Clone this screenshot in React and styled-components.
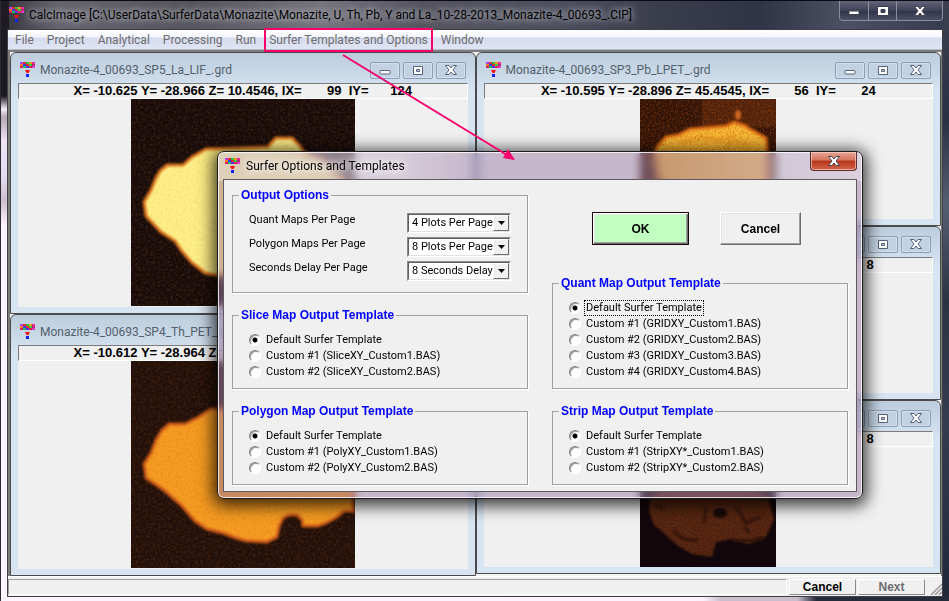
import React, { useState } from 'react';
import styled, { createGlobalStyle } from 'styled-components';

const GlobalStyle = createGlobalStyle`
  *, *::before, *::after {
    box-sizing: border-box;
  }

  body {
    margin: 0;
    background: #1d1f2b;
    font-family: "Liberation Sans", Arial, sans-serif;
    font-size: 11px;
    line-height: 16px;
    color: #000;
  }

  button, select, input {
    font: inherit;
    margin: 0;
  }
`

/* ---------- main window ---------- */

const Frame = styled.main`
  position: relative;
  display: flex;
  flex-direction: column;
  min-height: 100vh;
  padding: 0 6px 4px;
  border-top: 1px solid #0b0a14;
  border-left: 1px solid #2c2a30;
  overflow: hidden;
  background:
    linear-gradient(90deg, #fdf5fd 0, #fbf3fc 74%, #cbbdce 76%, #cbbdce 84%, #262b3a 86%, #262b3a 100%) bottom / 100% 5px no-repeat,
    linear-gradient(180deg, #201c24 0, #1c1820 95px, #f6ecfa 108px, #b5a8b6 116px, #efe4f5 140px, #e2dcf2 175px, #cfbfcf 200px, #fdf5fd 225px, #fdf5fd 100%) left / 8px 100% no-repeat,
    linear-gradient(180deg, #3c4052 0, #2a3144 20%, #566073 34%, #2b3344 50%, #343d50 70%, #20283a 100%) right / 8px 100% no-repeat,
    linear-gradient(90deg, #34333a 0, #65646d 6%, #55545c 20%, #75737c 34%, #54545f 44%, #4e505e 58%, #393c4b 70%, #2f3446 80%, #4b5062 89%, #363b50 100%);
`

const TitleBar = styled.header`
  display: flex;
  align-items: center;
  gap: 5px;
  height: 28px;
  padding-left: 2px;
`

const Title = styled.h1`
  flex: 1;
  margin: 0;
  font-family: Roboto, "Noto Sans", sans-serif;
  font-size: 12px;
  font-weight: 400;
  line-height: 16px;
  white-space: nowrap;
  text-shadow: 0 0 8px rgba(205, 205, 215, 0.9), 0 0 6px rgba(200, 200, 210, 0.8);
`

const CaptionButtons = styled.div`
  display: flex;
  align-self: flex-start;
  height: 20px;
  border: 1px solid #8b8e9c;
  border-top: 0;
  border-radius: 0 0 4px 4px;
  overflow: hidden;
`

const CaptionButton = styled.button`
  display: flex;
  align-items: center;
  justify-content: center;
  width: ${({ $wide }) => ($wide ? '46px' : '28px')};
  padding: 0;
  border: 0;
  background: linear-gradient(#62657a, #3f4257 50%, #2f3348 51%, #4c5066);

  & + & {
    border-left: 1px solid #8b8e9c;
  }
`

const Client = styled.div`
  flex: 1;
  display: flex;
  flex-direction: column;
  border: 1px solid #3f4046;
  background: #f0f0f0;
`

const MenuBar = styled.nav`
  display: flex;
  align-items: center;
  gap: 13px;
  height: 20px;
  padding-left: 7px;
  background: linear-gradient(#fff 0, #f3f5fb 35%, #d6dcef 45%, #e0e5f5 100%);
  border-bottom: 1px solid #b7bccd;
`

const MenuItem = styled.button`
  position: relative;
  padding: 0;
  border: 0;
  background: none;
  font-family: Roboto, "Noto Sans", sans-serif;
  font-size: 12px;
  line-height: 16px;
  color: #6d6d6d;
  white-space: nowrap;

  ${({ $marked }) => $marked && `
    &::after {
      content: "";
      position: absolute;
      inset: -4px -5px;
      border: 2px solid #f8006c;
    }
  `}
`

const Workspace = styled.section`
  flex: 1;
  display: grid;
  grid-template-columns: 1fr 1fr;
  border: 1px solid #7d7d7d;
  border-width: 2px 1px 0 2px;
  background: #f4f4f4;
`

const Column = styled.div`
  display: flex;
  flex-direction: column;
  padding-bottom: ${({ $short }) => ($short ? '2px' : '0')};
`

const ChildFrame = styled.article`
  flex: 1;
  display: flex;
  flex-direction: column;
  padding: 0 7px 6px;
  border: 1px solid #4b4b4b;
  border-radius: 6px 6px 0 0;
  background: linear-gradient(#bccddd 0, #d7e4f2 40px);
`

const ChildTitle = styled.header`
  display: flex;
  align-items: center;
  gap: 3px;
  height: 30px;
  padding: 4px 2px 0;
`

const ChildName = styled.h2`
  flex: 1;
  margin: 0 0 0 2px;
  font-family: Roboto, "Noto Sans", sans-serif;
  font-size: 12px;
  font-weight: 400;
  line-height: 16px;
  color: #54606c;
  white-space: nowrap;
`

const ChildButton = styled.button`
  display: flex;
  align-items: center;
  justify-content: center;
  width: 30px;
  height: 17px;
  padding: 0;
  border: 1px solid #8c9fba;
  border-radius: 2px;
  background: #c3d2e2;
  box-shadow: inset 0 0 0 1px #d3dfec;
`

const Readout = styled.div`
  height: 16px;
  border: 1px solid #fff;
  border-top: 1px solid #7b7b7b;
  border-left: 1px solid #7b7b7b;
  background: #f0f0f0;
  font-size: 13px;
  font-weight: 700;
  line-height: 14px;
  text-align: center;
  white-space: pre;
  overflow: hidden;
`

const Plot = styled.div`
  flex: 1;
  display: flex;
  justify-content: center;
  background: #f0f0f0;

  svg {
    display: block;
  }
`

const StatusBar = styled.footer`
  display: flex;
  gap: 2px;
  height: 20px;
  padding: 2px 0 1px;
  border-top: 1px solid #fff;
`

const StatusText = styled.div`
  flex: 1;
  border: 1px solid #fff;
  border-top-color: #a0a0a0;
  border-left-color: #a0a0a0;
`

const StatusButton = styled.button`
  width: 67px;
  padding: 0;
  border: 1px solid #fff;
  border-right-color: #8a8a8a;
  border-bottom-color: #8a8a8a;
  background: #f0f0f0;
  font-size: 12px;
  font-weight: 700;
  line-height: 14px;
  color: #000;

  &:disabled {
    color: #6d6d6d;
  }
`

/* ---------- options dialog ---------- */

const Dialog = styled.form`
  position: absolute;
  top: 150px;
  left: 216px;
  width: 646px;
  padding: 0 5px 6px;
  border: 1px solid #1d1a1e;
  border-radius: 7px;
  background:
    linear-gradient(90deg, rgba(255, 255, 255, 0.35) 0, rgba(255, 255, 255, 0.3) 180px, rgba(255, 255, 255, 0) 260px, rgba(255, 255, 255, 0) 420px, rgba(255, 255, 255, 0.35) 640px) top / 100% 29px no-repeat,
    rgba(155, 125, 165, 0.5);
  backdrop-filter: blur(4px);
  box-shadow: inset 0 0 0 1px rgba(255, 255, 255, 0.8), 0 3px 16px 4px rgba(0, 0, 0, 0.75);
  font-family: Roboto, "Liberation Sans", sans-serif;
`

const DialogTitle = styled.header`
  display: flex;
  align-items: center;
  gap: 6px;
  height: 27px;
  padding-left: 2px;
`

const DialogName = styled.h2`
  flex: 1;
  margin: 0;
  font-size: 12px;
  font-weight: 400;
  line-height: 16px;
  text-shadow: 0 0 8px #fff, 0 0 6px #fff;
`

const CloseButton = styled.button`
  display: flex;
  align-items: center;
  justify-content: center;
  align-self: flex-start;
  width: 47px;
  height: 19px;
  padding: 0;
  border: 1px solid #5d2c2c;
  border-top: 0;
  border-radius: 0 0 4px 4px;
  background: linear-gradient(#e6a594 0, #d4755f 45%, #b8341c 50%, #d2664a 100%);
  box-shadow: inset 0 0 0 1px rgba(255, 220, 210, 0.6);
`

const DialogBody = styled.div`
  display: grid;
  grid-template-columns: 1fr 1fr;
  gap: 24px;
  padding: 7px 8px 6px;
  border: 1px solid #5e5a60;
  background: #f0f0f0;
`

const Groups = styled.div`
  display: flex;
  flex-direction: column;
  gap: 14px;
`

const Group = styled.fieldset`
  min-width: 0;
  margin: 0;
  padding: ${({ $options }) => ($options ? '8px 16px 9px' : '9px 16px 8px')};
  border: 1px solid #a0a0a0;
  box-shadow: 1px 1px 0 #fff;
`

const GroupName = styled.legend`
  margin-left: -10px;
  padding: 0 2px;
  font-family: "Liberation Sans", Arial, sans-serif;
  font-size: 12px;
  font-weight: 700;
  line-height: 16px;
  color: #0000ff;
`

const Radio = styled.label`
  display: flex;
  align-items: center;
  gap: 4px;
  height: 16px;

  input {
    appearance: none;
    width: 12px;
    height: 12px;
    border: 1px solid;
    border-color: #808080 #fff #fff #808080;
    border-radius: 50%;
    background: #fff;
    box-shadow: inset 1px 1px 0 #9a9a9a;
  }

  input:checked {
    background: radial-gradient(circle, #000 0, #000 2px, #fff 3px);
  }
`

const RadioText = styled.span`
  padding: 0 1px;
  line-height: 14px;
  white-space: nowrap;
  outline: ${({ $focused }) => ($focused ? '1px dotted #000' : 'none')};
`

const OptionRow = styled.div`
  display: flex;
  justify-content: space-between;
  height: 24px;

  label {
    line-height: 18px;
  }
`

const SelectBox = styled.div`
  position: relative;
  width: 104px;
  height: 20px;
  margin-top: 2px;
  border: 1px solid;
  border-color: #8a8a8a #fff #fff #8a8a8a;
  background: #fff;

  select {
    display: block;
    appearance: none;
    width: 100%;
    height: 18px;
    padding: 0 0 0 3px;
    border: 1px solid;
    border-color: #5f5f5f #e3e3e3 #e3e3e3 #5f5f5f;
    border-radius: 0;
    background: #fff;
    color: #000;
  }
`

const DropArrow = styled.span`
  position: absolute;
  top: 1px;
  right: 1px;
  display: flex;
  align-items: center;
  justify-content: center;
  width: 16px;
  height: 16px;
  border: 1px solid;
  border-color: #fff #6d6d6d #6d6d6d #fff;
  background: #f0f0f0;
  pointer-events: none;
`

const Actions = styled.div`
  display: flex;
  align-items: flex-start;
  gap: 31px;
  height: 74px;
  padding: 25px 0 0 40px;
`

const ActionButton = styled.button`
  width: ${({ $primary }) => ($primary ? '97px' : '81px')};
  height: 33px;
  padding: 0;
  border: 1px solid;
  border-color: ${({ $primary }) => ($primary ? '#160808' : '#fff #6d6d6d #6d6d6d #fff')};
  background: ${({ $primary }) => ($primary ? '#c0ffc0' : '#f0f0f0')};
  box-shadow: ${({ $primary }) => ($primary
    ? 'inset 1px 1px 0 #fff, inset -1px -1px 0 #6d6d6d, inset -2px -2px 0 #a0a0a0, inset 2px 2px 0 #e3e3e3'
    : 'inset -1px -1px 0 #a0a0a0, inset 1px 1px 0 #e3e3e3')};
  font-family: "Liberation Sans", Arial, sans-serif;
  font-size: 12px;
  font-weight: 700;
  line-height: 16px;
  color: #000;
`

const Arrow = styled.svg`
  position: absolute;
  top: 50px;
  left: 339px;
  pointer-events: none;
`

/* ---------- drawings ---------- */

const tiles = [
  '#b040f0', '#f02828', '#28c838', '#ff9a18', '#f82898',
  '#ff7a18', '#2840ff', '#f02828', '#28d848', '#c02878',
  '#e01868', '#20c858', '#5038ff', '#f02048', '#e838d8',
]

const ProbeIcon = () => (
  <svg width="15" height="16" viewBox="0 0 15 16" aria-hidden="true">
    {tiles.map((color, i) => (
      <rect key={i} x={(i % 5) * 3} y={Math.floor(i / 5) * 2} width="3" height="2" fill={color} />
    ))}
    <path d="M6 0V6M12 0V6" stroke="#501868" strokeWidth="0.5" opacity="0.5" />
    <path d="M5 8H10L8.5 11H6.5Z" fill="#f81010" />
    <rect x="6" y="12" width="3" height="3" fill="#1020f8" />
  </svg>
)

const MinimizeGlyph = ({ light }) => (
  <svg width="14" height="12" viewBox="0 0 14 12" aria-hidden="true">
    <rect x="2" y={light ? 6 : 6.5} width="10" height="3.5" rx="0.5" fill="#fff" stroke={light ? '#3a3d50' : '#56617a'} />
  </svg>
)

const MaximizeGlyph = ({ light }) => (
  <svg width="14" height="12" viewBox="0 0 14 12" aria-hidden="true">
    {light
      ? <path d="M1.5 1.5H12.5V10.5H1.5ZM5 4.5V7.5H9V4.5Z" fill="#fff" stroke="#3a3d50" fillRule="evenodd" />
      : <path d="M2.5 2.5H11.5V10.5H2.5ZM5.5 5.5V7.5H8.5V5.5Z" fill="#fff" stroke="#56617a" fillRule="evenodd" />}
  </svg>
)

const CloseGlyph = ({ light }) => (
  <svg width="14" height="12" viewBox="0 0 14 12" aria-hidden="true">
    <path
      d="M1.5 1.5H5L7 4L9 1.5H12.5L9 6L12.5 10.5H9L7 8L5 10.5H1.5L5 6Z"
      fill="#fff"
      stroke={light ? '#4a4450' : '#56617a'}
    />
  </svg>
)

const MapFilters = ({ id, freq, tint }) => (
  <defs>
    <filter id={`dust-${id}`} x="0" y="0" width="100%" height="100%" colorInterpolationFilters="sRGB">
      <feTurbulence type="fractalNoise" baseFrequency={freq} numOctaves="2" seed="4" />
      <feColorMatrix values={tint} />
    </filter>
    <filter id={`soft-${id}`} colorInterpolationFilters="sRGB">
      <feGaussianBlur stdDeviation="0.8" />
    </filter>
  </defs>
)

const laOutline = 'M13 103L20 91L25 79L29 72L36 66H52L61 58L75 50L137 48L140 44L145 39H161L168 46L174 54L190 60L216 84V160L180 178L120 178L84 176L74 174L60 163L50 151L44 142L30 133L15 117Z'
const thOutline = 'M13 103L20 92L25 79L31 69L38 63H54L66 57L80 48L137 48L161 39L190 60L222 84V150H213L206 156L195 162L187 165H172L171 159L166 154H158L152 157L148 166L146 176L136 181L116 180L108 178L92 172L76 168L64 160L50 144L34 130L15 117Z'
const pbOutline = 'M14 56L17 48L26 38L38 36L50 30L86 27L94 23L104 26L110 30L126 39L128 60V90L110 118L60 118L18 80Z'

const LargeMap = ({ name, id, outline, fill, rim, back, tint }) => (
  <svg width="224" height="207" viewBox="0 0 224 207" role="img" aria-label={name}>
    <MapFilters id={id} freq="0.4" tint={tint} />
    <rect width="224" height="207" fill={back} />
    <path d={outline} fill={fill} stroke={rim} strokeWidth="3" filter={`url(#soft-${id})`} />
    <rect width="224" height="207" filter={`url(#dust-${id})`} />
  </svg>
)

const PbMap = () => (
  <svg width="136" height="120" viewBox="0 0 136 120" role="img" aria-label="Pb map">
    <MapFilters id="pb" freq="0.6" tint="0 0 0 0 0.75  0 0 0 0 0.3  0 0 0 0 0.05  1.2 0 0 0 -0.5" />
    <rect width="136" height="120" fill="#2c1208" />
    <rect x="62" width="74" height="28" fill="#5a280e" opacity="0.7" filter="url(#soft-pb)" />
    <path d={pbOutline} fill="#f8bc36" stroke="#d86a14" strokeWidth="3" filter="url(#soft-pb)" />
    <ellipse cx="98" cy="16" rx="3" ry="5" fill="#d2691e" filter="url(#soft-pb)" />
    <path d="M40 44L62 38L80 42L96 36M84 52L92 42L110 46" stroke="#e8981e" strokeWidth="4" fill="none" opacity="0.6" filter="url(#soft-pb)" />
    <rect width="136" height="120" filter="url(#dust-pb)" />
  </svg>
)

const UMap = () => (
  <svg width="136" height="120" viewBox="0 0 136 120" role="img" aria-label="U map">
    <MapFilters id="u" freq="0.6" tint="0 0 0 0 0.06  0 0 0 0 0.02  0 0 0 0 0.03  0.8 0 0 0 -0.3" />
    <rect width="136" height="120" fill="#12070c" />
    <path d="M10 50L9 64L14 78L26 88L38 99L52 107L72 110L76 95L92 92L108 97L126 90L134 72L128 50L90 20H40Z" fill="#5c2812" filter="url(#soft-u)" />
    <path d="M34 82Q38 94 58 93M66 60L64 76M96 60L106 76L120 70M110 86L104 80M16 58L24 62" stroke="#35150b" strokeWidth="3" fill="none" filter="url(#soft-u)" />
    <path d="M92 94H112L124 90" stroke="#35150b" strokeWidth="4" fill="none" filter="url(#soft-u)" />
    <ellipse cx="80" cy="66" rx="7" ry="5" fill="#170a0a" filter="url(#soft-u)" />
    <rect width="136" height="120" filter="url(#dust-u)" />
  </svg>
)

/* ---------- parts ---------- */

const ChildWindow = ({ name, readout, children }) => (
  <ChildFrame>
    <ChildTitle>
      <ProbeIcon />
      <ChildName>{name}</ChildName>
      <ChildButton type="button" aria-label="Minimize"><MinimizeGlyph /></ChildButton>
      <ChildButton type="button" aria-label="Maximize"><MaximizeGlyph /></ChildButton>
      <ChildButton type="button" aria-label="Close"><CloseGlyph /></ChildButton>
    </ChildTitle>
    <Readout>{readout}</Readout>
    <Plot>{children}</Plot>
  </ChildFrame>
)

const Template = ({ title, name, files, focused }) => {
  const [picked, setPicked] = useState(0);

  return (
    <Group>
      <GroupName>{title}</GroupName>
      {['Default Surfer Template', ...files.map((file, i) => `Custom #${i + 1} (${file}.BAS)`)].map((text, i) => (
        <Radio key={text}>
          <input type="radio" name={name} checked={picked === i} onChange={() => setPicked(i)} />
          <RadioText $focused={focused && picked === i}>{text}</RadioText>
        </Radio>
      ))}
    </Group>
  )
}

const Option = ({ id, label, value, choices }) => (
  <OptionRow>
    <label htmlFor={id}>{label}</label>
    <SelectBox>
      <select id={id} defaultValue={value}>
        {choices.map((choice) => <option key={choice}>{choice}</option>)}
      </select>
      <DropArrow>
        <svg width="7" height="4" viewBox="0 0 7 4" aria-hidden="true"><path d="M0 0H7L3.5 4Z" /></svg>
      </DropArrow>
    </SelectBox>
  </OptionRow>
)

const menus = ['File', 'Project', 'Analytical', 'Processing', 'Run', 'Surfer Templates and Options', 'Window']
const plots = ['4 Plots Per Page', '8 Plots Per Page']

const App = () => {
  return (
    <>
      <GlobalStyle />
      <Frame>
        <TitleBar>
          <ProbeIcon />
          <Title>CalcImage [C:\UserData\SurferData\Monazite\Monazite, U, Th, Pb, Y and La_10-28-2013_Monazite-4_00693_.CIP]</Title>
          <CaptionButtons>
            <CaptionButton type="button" aria-label="Minimize"><MinimizeGlyph light /></CaptionButton>
            <CaptionButton type="button" aria-label="Maximize"><MaximizeGlyph light /></CaptionButton>
            <CaptionButton type="button" aria-label="Close" $wide><CloseGlyph light /></CaptionButton>
          </CaptionButtons>
        </TitleBar>

        <Client>
          <MenuBar>
            {menus.map((menu) => (
              <MenuItem key={menu} type="button" $marked={menu.startsWith('Surfer')}>{menu}</MenuItem>
            ))}
          </MenuBar>

          <Workspace>
            <Column>
              <ChildWindow name="Monazite-4_00693_SP5_La_LIF_.grd" readout="X= -10.625 Y= -28.966 Z= 10.4546, IX=       99  IY=      124">
                <LargeMap
                  name="La map"
                  id="la"
                  outline={laOutline}
                  fill="#fdf086"
                  rim="#d8701c"
                  back="#180b0a"
                  tint="0 0 0 0 0.85  0 0 0 0 0.55  0 0 0 0 0.25  0.4 0 0 0 -0.17"
                />
              </ChildWindow>
              <ChildWindow name="Monazite-4_00693_SP4_Th_PET_.grd" readout="X= -10.612 Y= -28.964 Z= 10.4546, IX=       99  IY=      124">
                <LargeMap
                  name="Th map"
                  id="th"
                  outline={thOutline}
                  fill="#f69c22"
                  rim="#c9591a"
                  back="#200f0a"
                  tint="0 0 0 0 0.75  0 0 0 0 0.35  0 0 0 0 0.06  0.5 0 0 0 -0.2"
                />
              </ChildWindow>
            </Column>
            <Column $short>
              <ChildWindow name="Monazite-4_00693_SP3_Pb_LPET_.grd" readout="X= -10.595 Y= -28.896 Z= 45.4545, IX=       56  IY=       24">
                <PbMap />
              </ChildWindow>
              <ChildWindow name="Monazite-4_00693_SP2_Y_LPET_.grd" readout="X= -10.595 Y= -28.896 Z= 45.4545, IX=       56  IY=        8" />
              <ChildWindow name="Monazite-4_00693_SP1_U_LPET_.grd" readout="X= -10.595 Y= -28.896 Z= 45.4545, IX=       56  IY=        8">
                <UMap />
              </ChildWindow>
            </Column>
          </Workspace>

          <StatusBar>
            <StatusText />
            <StatusButton type="button">Cancel</StatusButton>
            <StatusButton type="button" disabled>Next</StatusButton>
            <svg width="15" height="16" viewBox="0 0 15 16" aria-hidden="true">
              <path d="M4 16L15 5M8 16L15 9M12 16L15 13" stroke="#9a9a9a" strokeWidth="1.5" />
            </svg>
          </StatusBar>
        </Client>

        <Dialog onSubmit={(e) => e.preventDefault()}>
          <DialogTitle>
            <ProbeIcon />
            <DialogName>Surfer Options and Templates</DialogName>
            <CloseButton type="button" aria-label="Close"><CloseGlyph light /></CloseButton>
          </DialogTitle>
          <DialogBody>
            <Groups>
              <Group $options>
                <GroupName>Output Options</GroupName>
                <Option id="quant" label="Quant Maps Per Page" value="4 Plots Per Page" choices={plots} />
                <Option id="polygon" label="Polygon Maps Per Page" value="8 Plots Per Page" choices={plots} />
                <Option id="delay" label="Seconds Delay Per Page" value="8 Seconds Delay" choices={['8 Seconds Delay']} />
              </Group>
              <Template title="Slice Map Output Template" name="slice" files={['SliceXY_Custom1', 'SliceXY_Custom2']} />
              <Template title="Polygon Map Output Template" name="poly" files={['PolyXY_Custom1', 'PolyXY_Custom2']} />
            </Groups>
            <Groups>
              <Actions>
                <ActionButton type="submit" $primary>OK</ActionButton>
                <ActionButton type="button">Cancel</ActionButton>
              </Actions>
              <Template title="Quant Map Output Template" name="grid" files={['GRIDXY_Custom1', 'GRIDXY_Custom2', 'GRIDXY_Custom3', 'GRIDXY_Custom4']} focused />
              <Template title="Strip Map Output Template" name="strip" files={['StripXY*_Custom1', 'StripXY*_Custom2']} />
            </Groups>
          </DialogBody>
        </Dialog>

        <Arrow width="180" height="115" viewBox="0 0 180 115" aria-hidden="true">
          <path d="M3 4L167 104" stroke="#f8006c" strokeWidth="2" />
          <path d="M175 109L163 107L168 98Z" fill="#f8006c" />
        </Arrow>
      </Frame>
    </>
  )
}

export default App
